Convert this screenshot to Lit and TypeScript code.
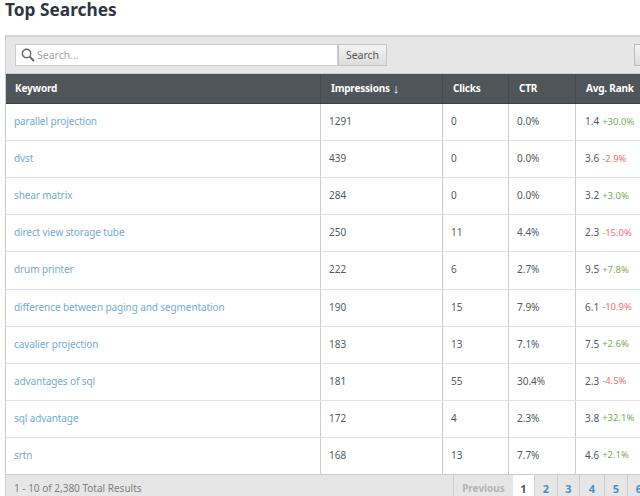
import { LitElement, html, css } from "lit";
import { customElement } from "lit/decorators.js";

const rows: [string, string, string, string, string, string][] = [
  ["parallel projection", "1291", "0", "0.0%", "1.4", "+30.0%"],
  ["dvst", "439", "0", "0.0%", "3.6", "-2.9%"],
  ["shear matrix", "284", "0", "0.0%", "3.2", "+3.0%"],
  ["direct view storage tube", "250", "11", "4.4%", "2.3", "-15.0%"],
  ["drum printer", "222", "6", "2.7%", "9.5", "+7.8%"],
  ["difference between paging and segmentation", "190", "15", "7.9%", "6.1", "-10.9%"],
  ["cavalier projection", "183", "13", "7.1%", "7.5", "+2.6%"],
  ["advantages of sql", "181", "55", "30.4%", "2.3", "-4.5%"],
  ["sql advantage", "172", "4", "2.3%", "3.8", "+32.1%"],
  ["srtn", "168", "13", "7.7%", "4.6", "+2.1%"],
];

@customElement("app-root")
export class AppRoot extends LitElement {
  static styles = css`
    :host { display: block; width: 640px; height: 496px; overflow: hidden; background: #fff; font-family: "Noto Sans", "Open Sans", sans-serif; color: #555; }
    h1 { margin: 0; padding: 0 0 0 5px; height: 35px; font-size: 17.3px; line-height: 20px; font-weight: 700; color: #2f3640; }
    .panel { margin-left: 5px; width: 660px; border-left: 1px solid #ccc; border-top: 2px solid #d4d4d4; }
    .toolbar { height: 37px; box-sizing: border-box; background: #e6e6e6; display: flex; align-items: flex-start; padding: 7px 0 0 9px; border-bottom: 1px solid #ccc; }
    .input { width: 323px; height: 22px; box-sizing: border-box; background: #fff; border: 1px solid #ccc; display: flex; align-items: center; gap: 2px; padding-left: 5px; font-size: 10.5px; color: #a6a6a6; }
    .btn { width: 49px; height: 22px; box-sizing: border-box; background: linear-gradient(#f4f4f4, #dcdcdc); border: 1px solid #c4c4c4; font-size: 10.5px; color: #555; display: flex; align-items: center; justify-content: center; }
    .extra { margin-left: 247px; width: 30px; height: 22px; box-sizing: border-box; background: linear-gradient(#f4f4f4, #dcdcdc); border: 1px solid #bbb; }
    .row { display: grid; grid-template-columns: 315px 122px 66px 67px 90px; height: 37.1px; box-sizing: border-box; border-bottom: 1px solid #e2e2e2; font-size: 10px; align-items: center; }
    .row > div { height: 100%; display: flex; align-items: center; padding-left: 8px; padding-bottom: 2px; box-sizing: border-box; border-right: 1px solid #ccc; white-space: nowrap; color: #565a60; }
    .row > div:last-child { padding-left: 9px; }
    .row.head { height: 30.05px; background: #50555a; border-bottom: 1px solid #3c4044; letter-spacing: -0.2px; }
    .head > div, .head > div:last-child { color: #fff; font-weight: 700; border-right: 1px solid #454a4e; padding-left: 10px; }
    .head > div:first-child { padding-left: 9px; }
    .arrow { font-weight: 400; font-size: 13px; line-height: 10px; margin-left: 3px; }
    a { color: #74abd4; text-decoration: none; letter-spacing: -0.1px; }
    .up { color: #7bad58; font-size: 9.5px; margin-left: 3px; }
    .down { color: #ee7070; font-size: 9.5px; margin-left: 3px; }
    .foot { height: 28px; margin-top: -1px; position: relative; box-sizing: border-box; background: #e6e6e6; border-top: 1px solid #ccc; display: flex; align-items: center; padding-left: 8px; font-size: 10px; color: #808080; }
    .pager { margin-left: auto; margin-right: 16px; height: 100%; display: grid; grid-template-columns: 60px 21px 23px 22px 25px 23px 23px; font-weight: 700; font-size: 11px; }
    .pager span { display: flex; align-items: center; justify-content: center; border-left: 1px solid #ccc; color: #4a90c4; }
    .pager .prev { color: #b4b4b4; font-size: 10px; }
    .pager .cur { background: #fff; color: #555; border-left: none; }
  `;

  render() {
    return html`
      <h1>Top Searches</h1>
      <div class="panel">
        <div class="toolbar">
          <div class="input">
            <svg width="14" height="14" viewBox="0 0 14 14"><circle cx="5.5" cy="5.5" r="4.2" fill="none" stroke="#666" stroke-width="1.4"/><path d="M8.6 8.6l4.4 4.4" stroke="#666" stroke-width="2"/></svg>
            Search...
          </div>
          <div class="btn">Search</div>
          <div class="extra"></div>
        </div>
        <div class="row head">
          <div>Keyword</div><div>Impressions<span class="arrow">↓</span></div><div>Clicks</div><div>CTR</div><div>Avg. Rank</div>
        </div>
        ${rows.map(r => html`
          <div class="row">
            <div><a>${r[0]}</a></div><div>${r[1]}</div><div>${r[2]}</div><div>${r[3]}</div>
            <div>${r[4]}<span class=${r[5][0] === "+" ? "up" : "down"}>${r[5]}</span></div>
          </div>`)}
        <div class="foot">1 - 10 of 2,380 Total Results
          <div class="pager">
            <span class="prev">Previous</span><span class="cur">1</span><span>2</span><span>3</span><span>4</span><span>5</span><span>6</span>
          </div>
        </div>
      </div>
    `;
  }
}
